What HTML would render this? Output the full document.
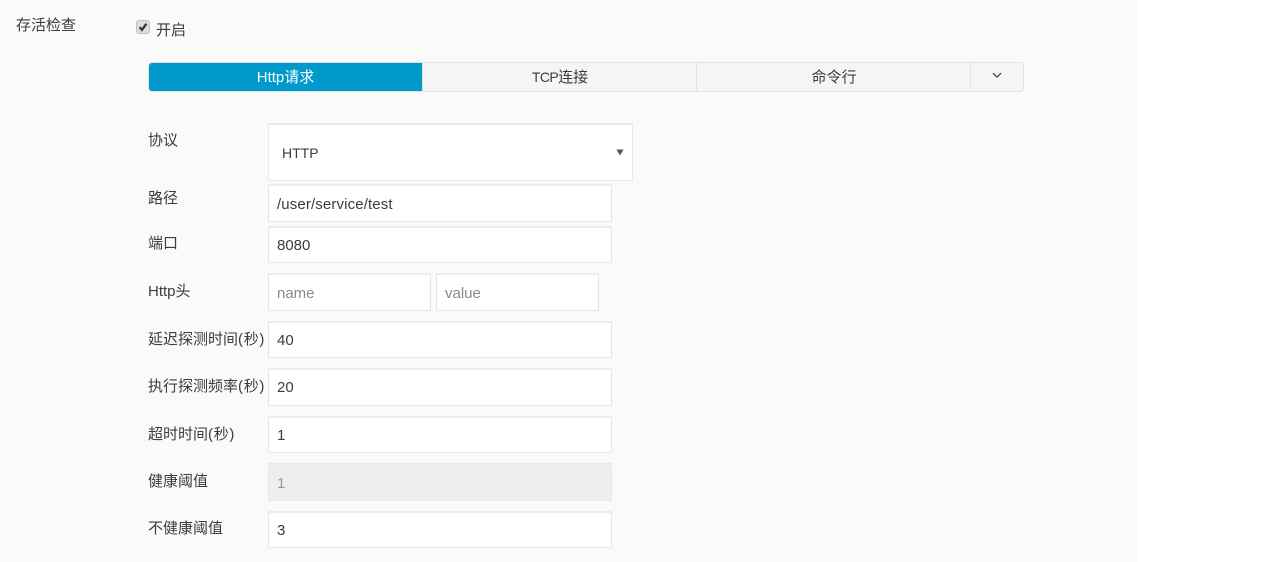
<!DOCTYPE html>
<html lang="zh">
<head>
<meta charset="utf-8">
<title>存活检查</title>
<style>
html,body{margin:0;padding:0;width:1267px;height:562px;overflow:hidden;background:#fff}
body{position:relative;font-family:"Liberation Sans","Noto Sans CJK SC",sans-serif;font-size:15px;color:#3c3c3c}
#bg{position:absolute;left:0;top:0;width:1137px;height:562px;background:#fafafa}
.t{position:absolute;white-space:nowrap;line-height:20px;color:#3c3c3c}
.t b{font-weight:normal;letter-spacing:.7px}
.i{position:absolute;box-sizing:border-box;background:#fff;border:1px solid #e6e6e6;border-top:2px solid #ececec;line-height:20px;color:#3c3c3c;padding-left:8px;white-space:nowrap}
.ph{color:#8a8a8a}
.dis{background:#eee;border-color:#e9e9e9;color:#9a9a9a}
#tabs{position:absolute;left:148px;top:62px;width:876px;height:30px;box-sizing:border-box;background:#f5f5f5;border:1px solid #e2e2e2;border-radius:4px}
.tab{position:absolute;top:0;height:28px;line-height:29px;text-align:center;color:#3c3c3c;box-sizing:border-box}
.sep{border-left:1px solid #e2e2e2}
#active{left:0;width:273px;background:#0099cc;color:#fff;border-radius:3px 0 0 3px}
</style>
</head>
<body>
<div id="bg"></div>

<div class="t" style="left:16px;top:16px">存活检查</div>

<svg style="position:absolute;left:136px;top:20px" width="14" height="15" viewBox="0 0 14 15">
<rect x="0.5" y="0.5" width="13" height="13" rx="2.5" fill="#dedede" stroke="#c2c2c2"/>
<path d="M3.6 7.2L6 9.8L10.4 3.8" fill="none" stroke="#3a3a3a" stroke-width="2.4"/>
</svg>
<div class="t" style="left:156px;top:21px">开启</div>

<div id="tabs">
<div class="tab" id="active">Http请求</div>
<div class="tab sep" style="left:273px;width:275px"><span style="font-size:14px;letter-spacing:-.6px">TCP</span>连接</div>
<div class="tab sep" style="left:547px;width:275px">命令行</div>
<div class="tab sep" style="left:821px;width:53px">
<svg style="position:absolute;left:21px;top:9px" width="10" height="7" viewBox="0 0 10 7"><path d="M1 1.2L5 5L9 1.2" fill="none" stroke="#3c3c3c" stroke-width="1.2"/></svg>
</div>
</div>

<div class="t" style="left:148px;top:131px">协议</div>
<div class="i" style="left:268px;top:123px;width:365px;height:58px;line-height:56px;padding-left:13px;font-size:14px;border-color:#eaeaea">HTTP
<svg style="position:absolute;left:347px;top:24px" width="8" height="7" viewBox="0 0 8 7"><path d="M0.5 0.5H7.5L4 6.5Z" fill="#555"/></svg>
</div>

<div class="t" style="left:148px;top:189px">路径</div>
<div class="i" style="left:268px;top:184px;width:344px;height:38px;line-height:37px;letter-spacing:.13px">/user/service/test</div>

<div class="t" style="left:148px;top:234px">端口</div>
<div class="i" style="left:268px;top:226px;width:344px;height:37px;line-height:36px">8080</div>

<div class="t" style="left:148px;top:282px">Http头</div>
<div class="i ph" style="left:268px;top:273px;width:163px;height:38px;line-height:37px">name</div>
<div class="i ph" style="left:436px;top:273px;width:163px;height:38px;line-height:37px">value</div>

<div class="t" style="left:148px;top:330px">延迟探测时间<b>(秒)</b></div>
<div class="i" style="left:268px;top:321px;width:344px;height:37px;line-height:36px">40</div>

<div class="t" style="left:148px;top:377px">执行探测频率<b>(秒)</b></div>
<div class="i" style="left:268px;top:368px;width:344px;height:38px;line-height:36px">20</div>

<div class="t" style="left:148px;top:425px">超时时间<b>(秒)</b></div>
<div class="i" style="left:268px;top:416px;width:344px;height:37px;line-height:36px">1</div>

<div class="t" style="left:148px;top:472px">健康阈值</div>
<div class="i dis" style="left:268px;top:463px;width:344px;height:38px;line-height:37px">1</div>

<div class="t" style="left:148px;top:519px">不健康阈值</div>
<div class="i" style="left:268px;top:511px;width:344px;height:37px;line-height:36px">3</div>
</body>
</html>
